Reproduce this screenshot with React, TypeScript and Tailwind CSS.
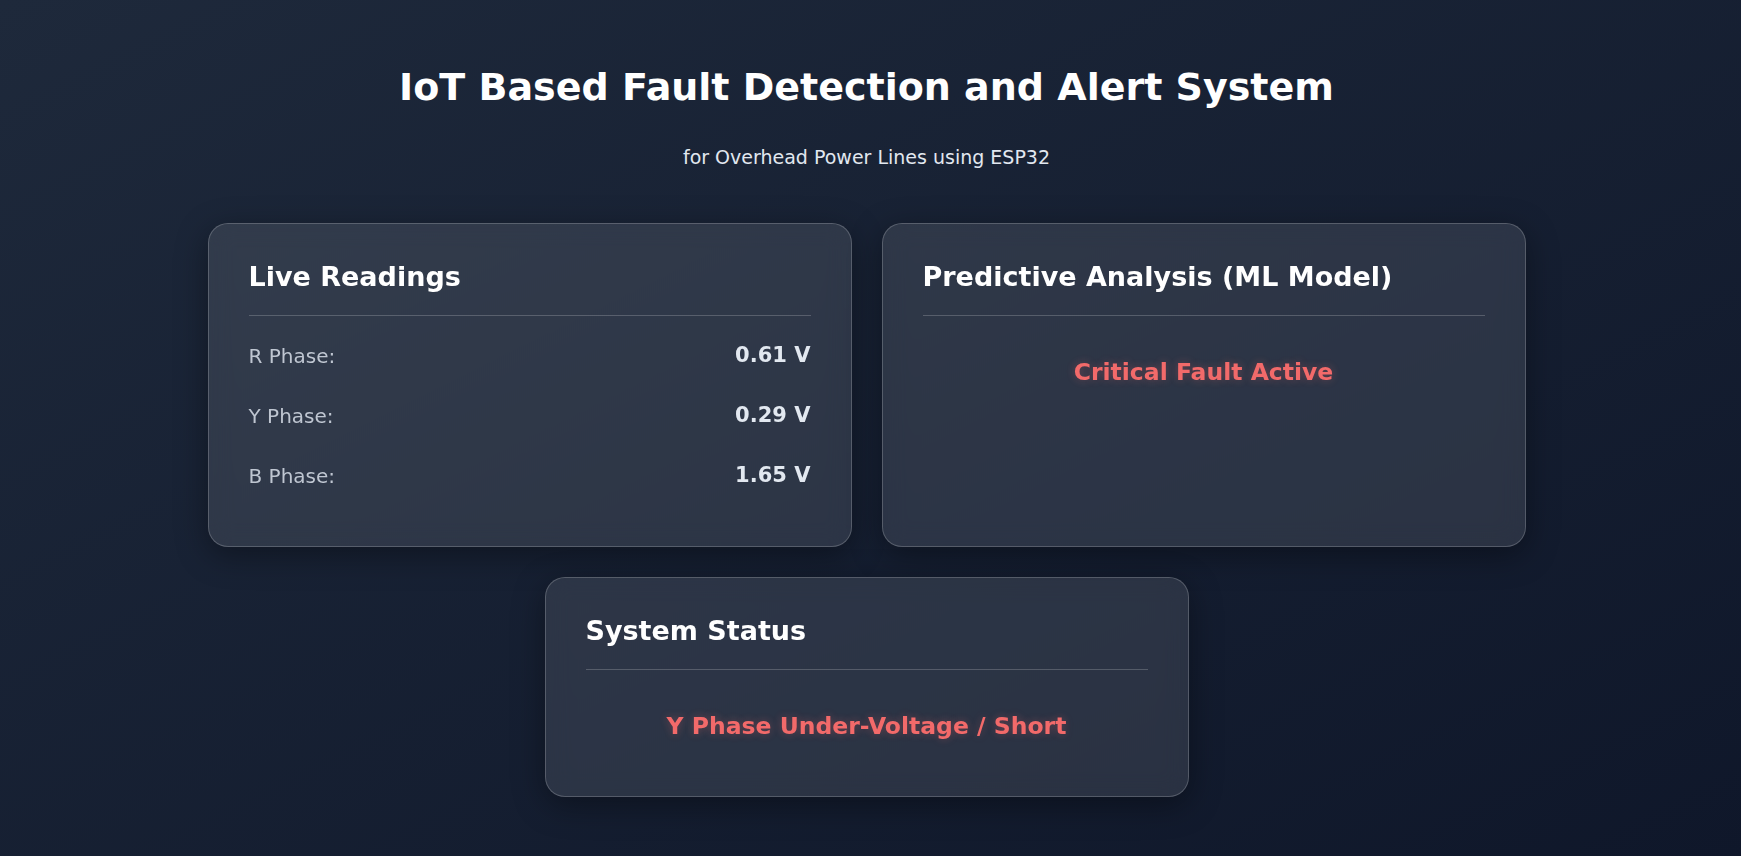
import React from "react";

type Reading = { label: string; value: string };

const readings: Reading[] = [
  { label: "R Phase:", value: "0.61 V" },
  { label: "Y Phase:", value: "0.29 V" },
  { label: "B Phase:", value: "1.65 V" },
];

function Card({
  title,
  children,
}: {
  title: string;
  children: React.ReactNode;
}) {
  return (
    <div className="w-[644px] rounded-[20px] border border-white/20 bg-white/10 px-10 pt-9 pb-10 shadow-[0_8px_32px_rgba(0,0,0,0.37)] backdrop-blur-md">
      <h2 className="border-b border-white/20 pb-[21px] text-[27px] leading-[34px] font-bold text-white">
        {title}
      </h2>
      {children}
    </div>
  );
}

function Alert({ text }: { text: string }) {
  return (
    <p className="mt-10 mb-[14px] text-center text-[23.5px] leading-8 font-bold text-[#f26a6a] [text-shadow:0_0_8px_rgba(255,107,107,0.3)]">
      {text}
    </p>
  );
}

export default function App() {
  return (
    <div className="min-h-screen bg-gradient-to-br from-[#1e293b] to-[#0f172a] pr-[8px] font-['DejaVu_Sans',sans-serif]">
      <div className="flex flex-col items-center pt-16 pb-16">
        <h1 className="text-[38px] leading-[46px] font-bold text-white">
          IoT Based Fault Detection and Alert System
        </h1>
        <p className="mt-[33px] text-[19px] leading-7 text-[#e2e8f0]">
          for Overhead Power Lines using ESP32
        </p>

        <div className="mt-[52px] flex w-[1318px] flex-wrap justify-center gap-[30px]">
          <Card title="Live Readings">
            <div className="mt-[10px] flex flex-col">
              {readings.map((r, i) => (
                <div key={i} className="flex h-[60px] items-center justify-between">
                  <span className="text-[20px] text-[#bfc6d1]">{r.label}</span>
                  <span className="text-[21px] font-bold text-[#e2e8f0]">
                    {r.value}
                  </span>
                </div>
              ))}
            </div>
          </Card>

          <Card title="Predictive Analysis (ML Model)">
            <Alert text="Critical Fault Active" />
          </Card>

          <Card title="System Status">
            <Alert text="Y Phase Under-Voltage / Short" />
          </Card>
        </div>
      </div>
    </div>
  );
}
